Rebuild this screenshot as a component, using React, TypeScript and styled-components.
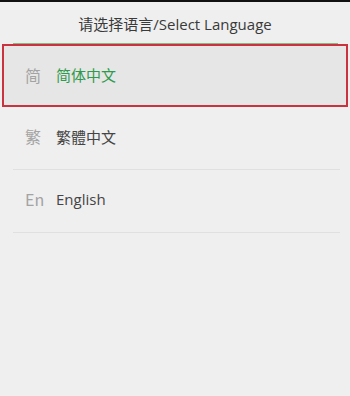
import React from "react";
import styled, { createGlobalStyle } from "styled-components";

const Global = createGlobalStyle`
  html, body { margin: 0; padding: 0; background: #efefef; }
  body { font-family: "Open Sans", "Noto Sans", "Noto Sans CJK SC", sans-serif; }
`;

const Page = styled.div`
  width: 350px;
  height: 396px;
  background: #efefef;
  display: flex;
  flex-direction: column;
  overflow: hidden;
`;

const StatusEdge = styled.div`
  height: 2px;
  background: #111;
`;

const Header = styled.div`
  height: 41px;
  display: flex;
  align-items: center;
  justify-content: center;
  padding-top: 2px;
  box-sizing: border-box;
`;

const Title = styled.h1`
  margin: 0;
  font-size: 15px;
  font-weight: 400;
  color: #3a3a3a;
  font-family: "Open Sans", "Noto Sans CJK SC", sans-serif;
`;

const HeaderRule = styled.div`
  height: 1px;
  margin: 0 12px 0 13px;
  background: #86b986;
`;

const List = styled.div`
  display: flex;
  flex-direction: column;
`;

const Row = styled.div<{ $selected?: boolean }>`
  display: flex;
  align-items: center;
  box-sizing: border-box;
  height: ${(p) => (p.$selected ? "63px" : "62px")};
  margin: ${(p) => (p.$selected ? "0 2px" : "0")};
  padding-left: ${(p) => (p.$selected ? "23px" : "25px")};
  padding-bottom: ${(p) => (p.$selected ? "2px" : "4px")};
  background: ${(p) => (p.$selected ? "#e6e6e6" : "transparent")};
  box-shadow: ${(p) => (p.$selected ? "inset 0 0 0 2px #c8333f" : "none")};
`;

const Icon = styled.span`
  width: 31px;
  font-size: 16px;
  color: #a3a3a3;
  font-family: "Noto Sans CJK SC", "Noto Sans", sans-serif;
  line-height: 1;
`;

const Label = styled.span<{ $selected?: boolean }>`
  font-size: 15px;
  color: ${(p) => (p.$selected ? "#2f9a4d" : "#454545")};
  font-family: "Open Sans", "Noto Sans CJK SC", "Noto Sans CJK TC", sans-serif;
`;

const Separator = styled.div`
  height: 1px;
  margin: 0 10px 0 13px;
  background: #e0e0e0;
`;

const langs = [
  { icon: "简", label: "简体中文", selected: true },
  { icon: "繁", label: "繁體中文" },
  { icon: "En", label: "English" },
];

export default function App() {
  return (
    <Page>
      <Global />
      <StatusEdge />
      <Header>
        <Title>请选择语言/Select Language</Title>
      </Header>
      <HeaderRule />
      <List>
        {langs.map((l) => (
          <React.Fragment key={l.label}>
            <Row $selected={l.selected}>
              <Icon>{l.icon}</Icon>
              <Label $selected={l.selected}>{l.label}</Label>
            </Row>
            {!l.selected && <Separator />}
          </React.Fragment>
        ))}
      </List>
    </Page>
  );
}
